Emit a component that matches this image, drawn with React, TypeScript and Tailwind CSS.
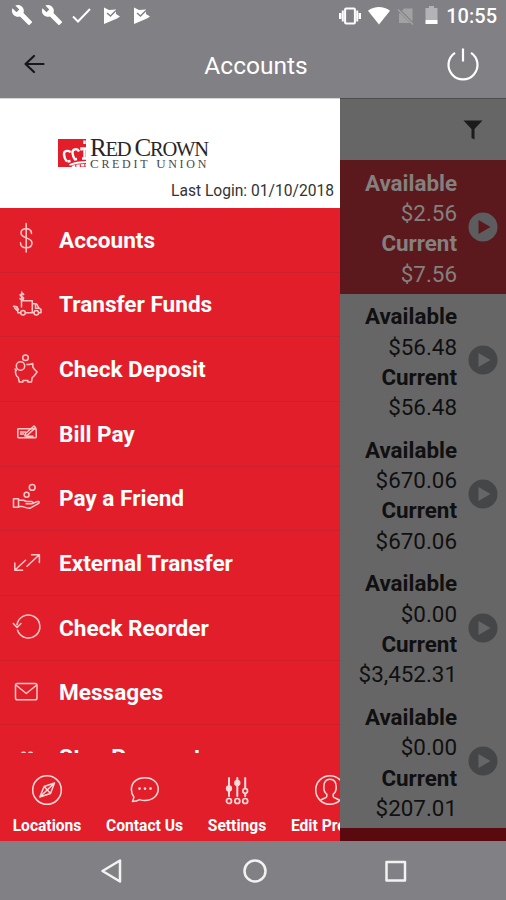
import type { ReactNode } from 'react';

const stroke = {
  fill: 'none',
  stroke: 'currentColor',
  strokeWidth: 1.5,
  strokeLinecap: 'round' as const,
  strokeLinejoin: 'round' as const,
};

const menuItems: { label: string; icon: ReactNode }[] = [
  {
    label: 'Accounts',
    icon: (
      <>
        <path d="M18.200 5.500V34" />
        <path d="M23.500 15.500c0-3-2.200-4.800-5.300-4.800s-5.200 1.800-5.200 4.300c0 6 11 3.800 11 10 0 3-2.400 4.800-5.800 4.800-3.500 0-5.700-1.800-5.700-5" />
      </>
    ),
  },
  {
    label: 'Transfer Funds',
    icon: (
      <>
        <path d="M13.500 17v7M15.700 11.500c-.4-1.300-3.600-1.200-3.600.6 0 1.800 3.600 1.200 3.600 3.200 0 1.900-3.400 1.700-3.700.2M13.800 9v9" />
        <path d="M13.500 17.800h10.800v12h-6.800M12.500 29.800H10l-1-5M24.300 20.800h4.200l2.500 4.300 2 1.200v3.500h-2M25.500 29.800h-1.200M27.500 21v4.300h3.500" />
        <circle cx="15" cy="29.800" r="2.300" />
        <circle cx="28.300" cy="29.800" r="2.300" />
        <path d="M5.500 23.300l3.500.5 1.500 3M6.500 24.800l2 2.300" />
      </>
    ),
  },
  {
    label: 'Check Deposit',
    icon: (
      <>
        <circle cx="12.500" cy="18" r="4.200" />
        <circle cx="17.500" cy="9.700" r="2.800" />
        <path d="M19 16.500h2.500l3.300-1v3.500l1.600 2.300 2.700 2.700-2.300 3c-.8 1.200-1.600 2-2.600 2.700l-.7 4.300h-3.600v-1.500h-5v1.500h-3.600l-1-4.500c-2.600-1.900-3.300-4.500-2.600-7.500M8.400 22.500l-1.300-1.500" />
      </>
    ),
  },
  {
    label: 'Bill Pay',
    icon: (
      <>
        <rect x="9.800" y="16.700" width="18.400" height="9" rx=".7" />
        <path d="M12.500 20h5M12.500 22h3M18 24.200h7" />
        <path d="M16.800 23.700l.8-2.400 8.400-7.300 1.600 1.800-8.300 7.300z" />
      </>
    ),
  },
  {
    label: 'Pay a Friend',
    icon: (
      <>
        <circle cx="24.200" cy="10.400" r="2.900" />
        <circle cx="18.600" cy="17.800" r="2.500" />
        <rect x="5.500" y="21.800" width="5" height="8.500" />
        <path d="M10.500 23.300h5l3 1.200h5c1.800 0 1.800 2.300 0 2.300h-5.500M25 26.200l4.500-1.600c2-.3 2.300 1.200.7 2L23 30.700c-1.300.6-2.700.6-4 .2l-4.500-1.300h-4" />
      </>
    ),
  },
  {
    label: 'External Transfer',
    icon: <path d="M19 24.300L31 13M23.500 12.700h7.900v7.800M17.500 18.200L7 28M6.800 21v7.300h7.800" />,
  },
  {
    label: 'Check Reorder',
    icon: (
      <>
        <path d="M9 18.800a11.500 11.500 0 1 1 .5 5.500" />
        <path d="M5.300 17.500l3.700 4 4-4" />
      </>
    ),
  },
  {
    label: 'Messages',
    icon: (
      <>
        <rect x="7.500" y="12.500" width="21.500" height="16.200" rx="1.800" />
        <path d="M8.500 14.500l9.800 8 9.800-8" />
      </>
    ),
  },
  {
    label: 'Stop Payment',
    icon: (
      <>
        <circle cx="15.500" cy="18.500" r="2.200" />
        <circle cx="22.500" cy="18.500" r="2.200" />
      </>
    ),
  },
];

const accounts = [
  { available: '$2.56', current: '$7.56', active: true },
  { available: '$56.48', current: '$56.48' },
  { available: '$670.06', current: '$670.06' },
  { available: '$0.00', current: '$3,452.31' },
  { available: '$0.00', current: '$207.01' },
];

const footerItems: { label: string; width: string; icon: ReactNode }[] = [
  {
    label: 'Locations',
    width: 'w-[94px]',
    icon: (
      <>
        <circle cx="16" cy="16" r="14.300" />
        <path d="M23.500 9l-4 10.500L8.800 23l4.300-10.500zM13.100 12.500l6.400 7M8.800 23L23.500 9" />
      </>
    ),
  },
  {
    label: 'Contact Us',
    width: 'w-[101px]',
    icon: (
      <>
        <path d="M3.500 27.500c.8-2 1.300-3.200 1.400-4.600C3.200 21 2.400 18.200 2.400 15.400 2.400 8.300 8.200 3.800 16 3.800s13.200 4.700 13.200 11.300S23.600 26.500 16 26.500c-2 0-3.800-.3-5.400-.9-2.300 1.300-4.600 1.800-7.100 1.900z" />
        <g fill="currentColor">
          <circle cx="10.500" cy="14.600" r=".6" />
          <circle cx="16" cy="14.600" r=".6" />
          <circle cx="21.500" cy="14.600" r=".6" />
        </g>
      </>
    ),
  },
  {
    label: 'Settings',
    width: 'w-[84px]',
    icon: (
      <>
        <path strokeWidth="2" d="M8 4v18M16.300 4v18M24.200 4v18" />
        <g fill="currentColor">
          <circle cx="8" cy="14.500" r="2.400" />
          <circle cx="16.300" cy="9" r="2.400" />
        </g>
        <g className="fill-[#e31e2b]" strokeWidth="1.700">
          <circle cx="24.200" cy="17" r="2.300" />
          <circle cx="8" cy="27" r="2.500" />
          <circle cx="16.300" cy="27" r="2.500" />
          <circle cx="24.200" cy="27" r="2.500" />
        </g>
      </>
    ),
  },
  {
    label: 'Edit Profile',
    width: 'w-[101px]',
    icon: (
      <>
        <circle cx="16" cy="16" r="14.300" />
        <path d="M6.500 26.300c1.400-1.800 6.300-2.200 6.300-3.900v-2.200c-2-1.300-3-4.200-3-7.200 0-5.300 2.500-7.800 6.200-7.800s6.200 2.500 6.200 7.800c0 3-1 5.900-3 7.200v2.200c0 1.700 4.900 2.100 6.300 3.900" />
      </>
    ),
  },
];

function StatusBar() {
  return (
    <div className="flex h-8 items-center pr-[9px] pl-[11px] text-white">
      <div className="flex items-center gap-2">
        {[0, 1].map((n) => (
          <svg key={n} className="mt-[-2px] h-[22px] w-[22px]" viewBox="0 0 24 24" fill="currentColor">
            <path d="M22.700 19l-9.100-9.100c.9-2.300.4-5-1.500-6.900-2-2-5-2.400-7.400-1.300L9 6 6 9 1.600 4.700C.4 7.100.9 10.100 2.900 12.100c1.900 1.900 4.600 2.400 6.900 1.500l9.100 9.100c.4.4 1 .4 1.400 0l2.300-2.300c.5-.4.5-1.100.1-1.400z" />
          </svg>
        ))}
        <svg className="-ml-px h-[22px] w-[22px]" viewBox="0 0 22 22" {...stroke} strokeWidth={2}>
          <path d="M3 11.500l5 5L20 4" strokeLinecap="butt" strokeLinejoin="miter" />
        </svg>
        {[0, 1].map((n) => (
          <svg key={n} className="h-[22px] w-[22px]" viewBox="0 0 22 22">
            <path d="M4 2.500l5 2.500 7-.5v4.500l4 2.500-3 2L4 19z" fill="currentColor" />
            <path d="M7 8l3.500 3L16 5.500" fill="none" stroke="#818084" strokeWidth="1.500" />
          </svg>
        ))}
      </div>
      <div className="ml-auto flex items-center">
        <svg className="h-[22px] w-[24px]" viewBox="0 0 24 22" fill="currentColor">
          <path d="M1 8h2.400v6H1zM20.600 8H23v6h-2.400zM3.800 5.500h2v11h-2zM18.200 5.500h2v11h-2z" />
          <rect x="7.100" y="3.400" width="9.800" height="15.200" rx="1" fill="none" stroke="currentColor" strokeWidth="2" />
        </svg>
        <svg className="ml-[6px] h-[22px] w-[22px]" viewBox="0 0 22 22" fill="currentColor">
          <path d="M11 19.500L0 5.700C6.500.8 15.500.8 22 5.700z" />
        </svg>
        <svg className="ml-[7px] h-[22px] w-[18px] text-[#a2a1a4]" viewBox="0 0 18 22">
          <path d="M2 9l5-5.500h8.500V18H2z" fill="currentColor" />
          <path d="M1.500 4.500l15 15" stroke="#818084" strokeWidth="3" />
          <path d="M1 4.500l15 15" stroke="currentColor" strokeWidth="1.600" />
        </svg>
        <svg className="ml-[10px] h-[22px] w-[13px]" viewBox="0 0 13 22">
          <path d="M4 1h5v2h3.500v12H.5V3H4z" fill="#b3b2b5" />
          <path d="M.5 15h12v4H.5z" fill="currentColor" />
        </svg>
        <span className="ml-[8px] text-[20px] leading-none font-medium">10:55</span>
      </div>
    </div>
  );
}

function Header() {
  return (
    <header className="h-[98px] shrink-0 bg-[#818084]">
      <StatusBar />
      <div className="grid h-[66px] grid-cols-[80px_1fr_80px] items-center text-white">
        <svg className="ml-[23px] h-[22px] w-[24px] text-[#171717]" viewBox="0 0 24 22" {...stroke} strokeWidth={2.200}>
          <path d="M20.500 10H2.500M11 2L2.500 10l8.500 8" />
        </svg>
        <h1 className="pt-[2px] pl-[6px] text-center text-[24.500px] leading-none">Accounts</h1>
        <svg className="-mt-[3px] ml-[19px] h-9 w-9" viewBox="0 0 36 36" {...stroke} strokeWidth={2.200}>
          <path d="M18 2.500v13M10 6.800a14.500 14.500 0 1 0 16 0" strokeLinecap="butt" />
        </svg>
      </div>
    </header>
  );
}

function Logo() {
  return (
    <div className="ml-[58px] flex h-[30px] gap-[4px]">
      <svg className="h-[28px] w-[28px]" viewBox="0 0 28 28">
        <path d="M0 0h28v28H0z" fill="#e31e2b" />
        <g fill="none" stroke="#fff" strokeWidth="2.400">
          <path d="M12.500 13.500c-1-2.300-6.500-2.500-6.500 1.500 0 3 1.200 5.500 3 7.500" />
          <path d="M21 12.500c-1.500-3.500-7-2.500-6.500 1.500.2 2.500 1 4.500 2.500 6.500" />
          <path d="M28 9.500h-4.500v2M26.500 10v9M26.500 1.500v3.500" />
          <path d="M9.500 22.500l3-.5M16 20.500l3-.5M24 19.500h4" />
          <path d="M11.500 26c5-2 10-3 16.500-3" strokeWidth="1.800" />
          <path d="M14 28c4-1.200 9-1.800 14-1.800" strokeDasharray="3.500 1" />
        </g>
      </svg>
      <div className="font-['Liberation_Serif',serif] whitespace-nowrap text-[#2a2627]">
        <div className="text-[25px] leading-[18px] tracking-[-1.200px]">
          R<span className="text-[20.500px]">ED</span>
          <span className="ml-[4px]">C</span>
          <span className="text-[20.500px]">ROWN</span>
        </div>
        <div className="mt-px text-[13px] leading-[10px] tracking-[2.700px] text-[#4a4647]">
          C<span className="text-[12px]">REDIT</span> U<span className="text-[12px]">NION</span>
        </div>
      </div>
    </div>
  );
}

function Drawer() {
  return (
    <aside className="flex w-[340px] shrink-0 flex-col overflow-hidden bg-[#e31e2b] text-white">
      <div className="h-[110px] shrink-0 border-t border-[#d5d5d5] bg-white pt-[40px]">
        <Logo />
        <p className="mt-[13px] pr-[6px] text-right text-[15.600px] leading-[18px] text-[#333]">
          Last Login: 01/10/2018
        </p>
      </div>
      <ul className="h-[545px] shrink-0 overflow-hidden">
        {menuItems.map((item) => (
          <li key={item.label} className="flex h-[64.680px] items-center border-b border-[#ce1f2b] pl-2">
            <svg className="-mt-[3px] h-10 w-10 shrink-0 text-[#ffc9c8]" viewBox="0 0 40 40" {...stroke}>
              {item.icon}
            </svg>
            <span className="ml-[11px] pt-[2px] text-[22.600px] leading-none font-bold">{item.label}</span>
          </li>
        ))}
      </ul>
      <nav className="flex h-[88px] w-[400px] shrink-0 pt-[21px]">
        {footerItems.map((item) => (
          <div key={item.label} className={`flex shrink-0 flex-col items-center ${item.width}`}>
            <svg className="h-8 w-8 text-[#ffdbda]" viewBox="0 0 32 32" {...stroke}>
              {item.icon}
            </svg>
            <span className="mt-[11px] text-[15.600px] leading-[18px] font-bold whitespace-nowrap">{item.label}</span>
          </div>
        ))}
      </nav>
    </aside>
  );
}

function AccountList() {
  return (
    <section className="flex min-w-0 flex-1 flex-col border-t border-[#4c4a4c] bg-[#666] text-[#101010]">
      <div className="flex h-[61px] shrink-0 items-center justify-end pr-[23px]">
        <svg className="h-[20px] w-[20px] text-[#1b1b1b]" viewBox="0 0 20 20" fill="currentColor">
          <path d="M.5.500h19L11.500 9v10.500L8.500 18V9z" />
        </svg>
      </div>
      {accounts.map((account, i) => (
        <div
          key={i}
          className={`flex h-[133.600px] shrink-0 items-center justify-end pr-[8px] ${account.active ? 'bg-[#5c191d] text-[#84807f]' : ''}`}
        >
          <div className="pt-[3px] text-right text-[22.400px] leading-[30.300px]">
            <p className="font-bold">Available</p>
            <p>{account.available}</p>
            <p className="font-bold">Current</p>
            <p>{account.current}</p>
          </div>
          <svg className="ml-[11px] h-[30px] w-[30px]" viewBox="0 0 30 30">
            <circle cx="15" cy="15" r="14.500" className={account.active ? 'fill-[#5d5d5f]' : 'fill-[#454648]'} />
            <path d="M10.500 8l12 7-12 7z" className={account.active ? 'fill-[#5c191d]' : 'fill-[#666]'} />
          </svg>
        </div>
      ))}
      <div className="flex-1 bg-[#5a090e]" />
    </section>
  );
}

function SystemNav() {
  return (
    <footer className="flex h-[59px] shrink-0 items-center justify-between bg-[#818084] pr-[99px] pl-[100px] text-[#f2f2f2]">
      <svg className="h-6 w-6" viewBox="0 0 24 24" {...stroke} strokeWidth={2.500}>
        <path d="M20 1.500v21L2.500 12z" />
      </svg>
      <svg className="h-6 w-6" viewBox="0 0 24 24" {...stroke} strokeWidth={2.500}>
        <circle cx="12" cy="12" r="10.500" />
      </svg>
      <svg className="h-[22px] w-[22px]" viewBox="0 0 22 22" {...stroke} strokeWidth={2.500}>
        <rect x="1.500" y="2" width="18.500" height="18.500" />
      </svg>
    </footer>
  );
}

export default function App() {
  return (
    <div className="flex h-[900px] w-[506px] flex-col overflow-hidden font-[Roboto,sans-serif]">
      <Header />
      <main className="flex h-[743px] shrink-0">
        <Drawer />
        <AccountList />
      </main>
      <SystemNav />
    </div>
  );
}
